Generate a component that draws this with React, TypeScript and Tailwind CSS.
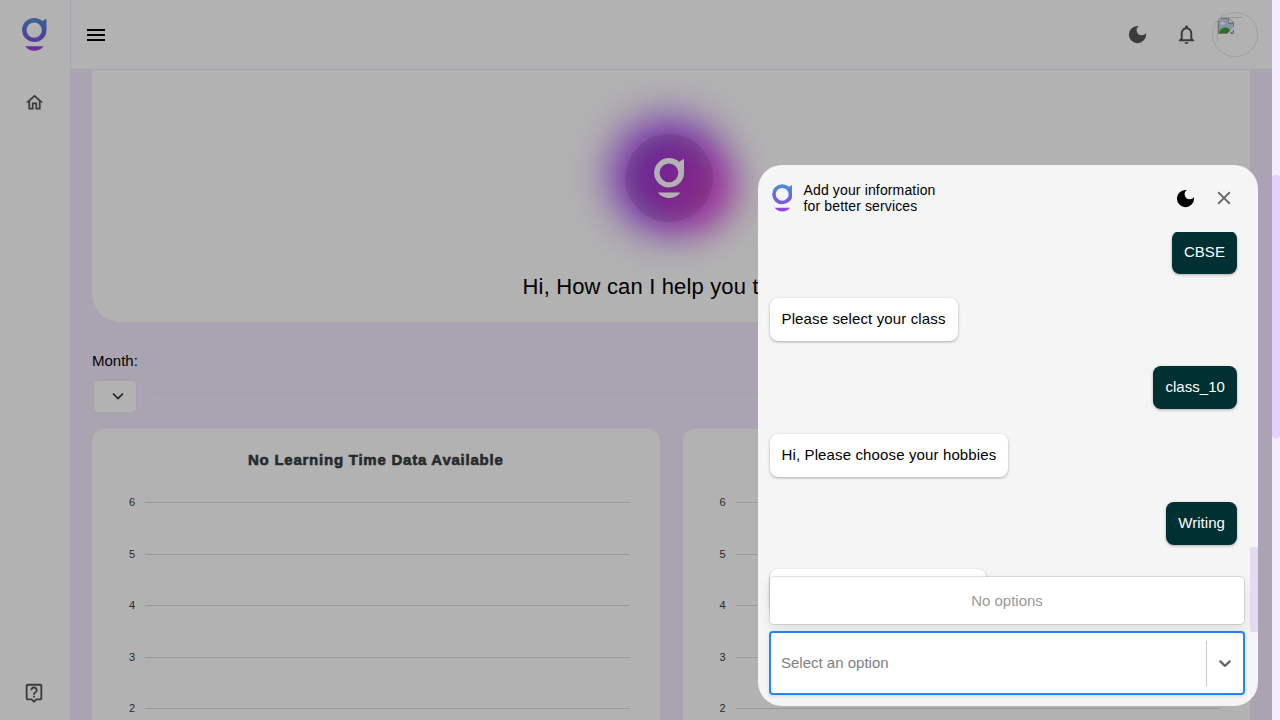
import { MdClose, MdDarkMode, MdMenu, MdNotificationsNone, MdOutlineHome, MdOutlineLiveHelp } from "react-icons/md";

function Logo({ id, className, plain = false }: { id: string; className: string; plain?: boolean }) {
  const paint = plain ? "#ffffff" : `url(#${id})`;
  return (
    <svg viewBox="0 0 24.5 33" className={className} fill={paint}>
      <defs>
        <linearGradient id={id} x1="0" y1="0" x2="0" y2="33" gradientUnits="userSpaceOnUse">
          <stop offset="0" stopColor="#4a90d9" />
          <stop offset="0.55" stopColor="#735fe0" />
          <stop offset="1" stopColor="#a03be8" />
        </linearGradient>
      </defs>
      <path fillRule="evenodd" d="M12.200 0c3.200 0 6 1.100 8.200 3l4.100-2.500v11.400a12.200 12 0 1 1-12.300-11.900zM12.200 4.500a7.700 7.600 0 1 0 0 15.200 7.700 7.600 0 0 0 0-15.200z" />
      <path d="M3.200 28.200h18.300c-4.200 6-14.100 6-18.300 0z" />
    </svg>
  );
}

function BrokenImage() {
  return (
    <svg viewBox="0 0 16 16" className="h-4 w-4">
      <path d="M0 0h10.500l5.500 5v11H0z" fill="#a5a5a5" />
      <path d="M1 1h9v5h5v9H1z" fill="#c3d5f5" />
      <path d="M10.500 0v5H16z" fill="#fff" stroke="#9a9a9a" strokeWidth=".8" />
      <path d="M2.500 5.500c0-2 3-2.500 3.500-.8 1.500-.2 2 1.800.5 2H3.500c-.6 0-1-.6-1-1.200z" fill="#fff" />
      <path d="M1 15c1-4 4-5.500 6.500-5.500S12 11 14 15z" fill="#41a52a" />
      <path d="M9 16l7-7.500V11l-4.500 5z" fill="#fff" />
    </svg>
  );
}

function ChartCard({ title }: { title?: string }) {
  return (
    <section className="h-[400px] flex-1 rounded-[12px] bg-white pl-[30px] pr-[30px] pt-[20px]">
      <h2 className="h-[22px] whitespace-nowrap text-center text-[15px] font-bold leading-[22px] tracking-[0.76px] text-[#373d3f] [-webkit-text-stroke:0.6px_#373d3f]">
        {title}
      </h2>
      <div className="mt-[6px]">
        {[6, 5, 4, 3, 2].map((n) => (
          <div key={n} className="flex h-[51.5px] items-center gap-[10px]">
            <span className="-mt-px w-[13px] text-right text-[11px] text-[#373d3f]">{n}</span>
            <span className="h-px flex-1 bg-[#dcdcdc]" />
          </div>
        ))}
      </div>
    </section>
  );
}

function Bubble({ text, mine = false }: { text: string; mine?: boolean }) {
  return (
    <div className={mine ? "flex justify-end" : "flex justify-start"}>
      <div
        className={
          mine
            ? "h-[43px] rounded-[8px] bg-[#003032] px-3 text-[15px] leading-[42px] tracking-[0.05px] text-white shadow-[0_1px_3px_rgba(0,0,0,0.3)]"
            : "h-[43px] rounded-[8px] bg-white px-3 text-[15px] leading-[42px] tracking-[0.13px] text-black shadow-[0_1px_3px_rgba(0,0,0,0.3)]"
        }
      >
        {text}
      </div>
    </div>
  );
}

export default function App() {
  return (
    <div className="relative flex h-[720px] w-[1280px] overflow-hidden bg-[#f4ebff] font-['Liberation_Sans',Arial,sans-serif] text-black">
      <aside className="flex h-full w-[71px] shrink-0 flex-col items-center border-r border-[#f4ebff] bg-white pr-[1px] pt-[18px]">
        <Logo id="side" className="h-[33px] w-[24.5px]" />
        <MdOutlineHome className="mr-[1px] mt-[41px] h-[21px] w-[21px] text-[#555]" />
        <MdOutlineLiveHelp className="mb-[16px] mr-[1px] mt-auto h-[22px] w-[22px] text-[#555]" />
      </aside>

      <div className="flex min-w-0 flex-1 flex-col">
        <header className="flex h-[70px] shrink-0 items-center border-b border-[#f4ebff] bg-white pl-[13px] pr-[14px]">
          <MdMenu className="h-6 w-6" />
          <MdDarkMode className="ml-auto h-[23px] w-[23px] text-[#555]" />
          <MdNotificationsNone className="ml-[26px] h-[23px] w-[23px] text-[#555]" />
          <div className="ml-[14px] h-[45px] w-[46px] overflow-hidden rounded-full border border-[#e5e5e5] pl-[4px] pt-[4px]">
            <div className="h-[24px] w-[25px] border-l border-t border-l-[#e2e2e2] border-t-[#d5d5d5]">
              <BrokenImage />
            </div>
          </div>
        </header>

        <main className="min-h-0 flex-1 overflow-hidden pl-[21px] pr-[22px]">
          <section className="flex h-[252px] w-[1158px] flex-col items-center overflow-hidden rounded-b-[28px] bg-white pt-[64px]">
            <div className="relative flex h-[88px] w-[88px] -translate-x-[2px] items-center justify-center">
              <div className="absolute -left-[16px] -top-[18px] h-[118px] w-[118px] rounded-full bg-[#a446f0] opacity-90 blur-[20px]" />
              <div className="absolute left-[38px] top-[18px] h-[76px] w-[72px] rounded-full bg-[#f04cd0] opacity-65 blur-[18px]" />
              <div className="absolute inset-[8px] rounded-full bg-[#b41cf0] opacity-60 blur-[14px]" />
              <div className="absolute left-[36px] top-[30px] h-[44px] w-[48px] rounded-full bg-[#f030d8] opacity-40 blur-[14px]" />
              <div className="absolute inset-0 rounded-full bg-[#444]/16" />
              <Logo id="hero" plain className="relative h-[40.5px] w-[30px]" />
            </div>
            <p className="mt-[51px] whitespace-nowrap text-[22px] leading-7 tracking-[0.16px]">Hi, How can I help you today?</p>
          </section>

          <div className="mt-[29px] text-[15px] leading-5">Month:</div>
          <div className="mt-2 flex items-center gap-4">
            <div className="flex h-[35px] w-[46px] items-center justify-end rounded-[6px] border-2 border-[#ededf0] bg-white pb-px pr-[11px]">
              <svg viewBox="0 0 14 14" className="h-[14px] w-[14px]" fill="none" stroke="#333" strokeWidth="1.700">
                <path d="M2 4.500l5 5 5-5" />
              </svg>
            </div>
            <div className="mb-[7px] h-px flex-1 bg-[#e8e6ea]" />
          </div>

          <div className="mt-[15px] flex gap-[23px]">
            <ChartCard title="No Learning Time Data Available" />
            <ChartCard />
          </div>
        </main>
      </div>

      <div className="h-full w-2 shrink-0 bg-[#f4ebff] pt-[175px]">
        <div className="h-[263px] rounded-[3px] bg-[#e5d1fb]" />
      </div>

      <div className="absolute inset-y-0 left-0 right-2 bg-black/30" />

      <div className="absolute left-[757.5px] top-[164.5px] flex h-[541px] w-[500px] flex-col overflow-hidden rounded-[24px] bg-[#f5f5f5]">
        <div className="flex h-[67px] shrink-0 items-center pl-[14px] pr-[23px]">
          <Logo id="chat" className="-mt-px h-[28px] w-[20.5px]" />
          <p className="-mt-px ml-[11.5px] text-[14px] leading-4 tracking-[0.14px]">
            Add your information
            <br />
            for better services
          </p>
          <MdDarkMode className="ml-auto h-[23px] w-[23px]" />
          <MdClose className="ml-[16px] h-[22px] w-[22px] text-[#666]" />
        </div>

        <div className="flex h-[400px] shrink-0 overflow-hidden">
          <div className="flex w-[492px] flex-col pl-3 pr-[12.5px]">
            <div className="-mt-[0.5px] mb-[24px]">
              <Bubble mine text="CBSE" />
            </div>
            <div className="flex flex-col gap-[25px]">
              <Bubble text="Please select your class" />
              <Bubble mine text="class_10" />
              <Bubble text="Hi, Please choose your hobbies" />
              <Bubble mine text="Writing" />
            </div>
            <div className="mt-[24px] h-[43px] w-[216px] shrink-0 rounded-[8px] bg-white shadow-[0_1px_3px_rgba(0,0,0,0.3)]" />
          </div>
          <div className="w-2 pt-[315px]">
            <div className="h-[85px] rounded-[2px] bg-[#e6d9f3]" />
          </div>
        </div>

        <div className="relative -mt-[0.5px] ml-[11.5px] h-[64px] w-[476px] shrink-0">
          <div className="absolute -top-[54px] left-[1px] flex h-[47px] w-[474px] items-center justify-center rounded-[4px] bg-white pt-px text-[15px] text-[#999] shadow-[0_0_0_1px_rgba(0,0,0,0.1),0_4px_11px_rgba(0,0,0,0.1)]">
            No options
          </div>
          <div className="flex h-full items-center rounded-[4px] border-2 border-[#2684ff] bg-white pl-[10px] text-[15px] text-[#808080] shadow-[0_1px_4px_rgba(0,0,0,0.12)]">
            Select an option
            <span className="ml-auto h-[45px] w-px bg-[#ccc]" />
            <svg viewBox="0 0 20 20" className="mx-[8px] h-5 w-5" fill="#666">
              <path d="M4.516 7.548c0.436-0.446 1.043-0.481 1.576 0l3.908 3.747 3.908-3.747c0.533-0.481 1.141-0.446 1.574 0 0.436 0.445 0.408 1.197 0 1.615-0.406 0.418-4.695 4.502-4.695 4.502-0.217 0.223-0.502 0.335-0.787 0.335s-0.570-0.112-0.789-0.335c0 0-4.287-4.084-4.695-4.502s-0.436-1.170 0-1.615z" />
            </svg>
          </div>
        </div>
      </div>
    </div>
  );
}
